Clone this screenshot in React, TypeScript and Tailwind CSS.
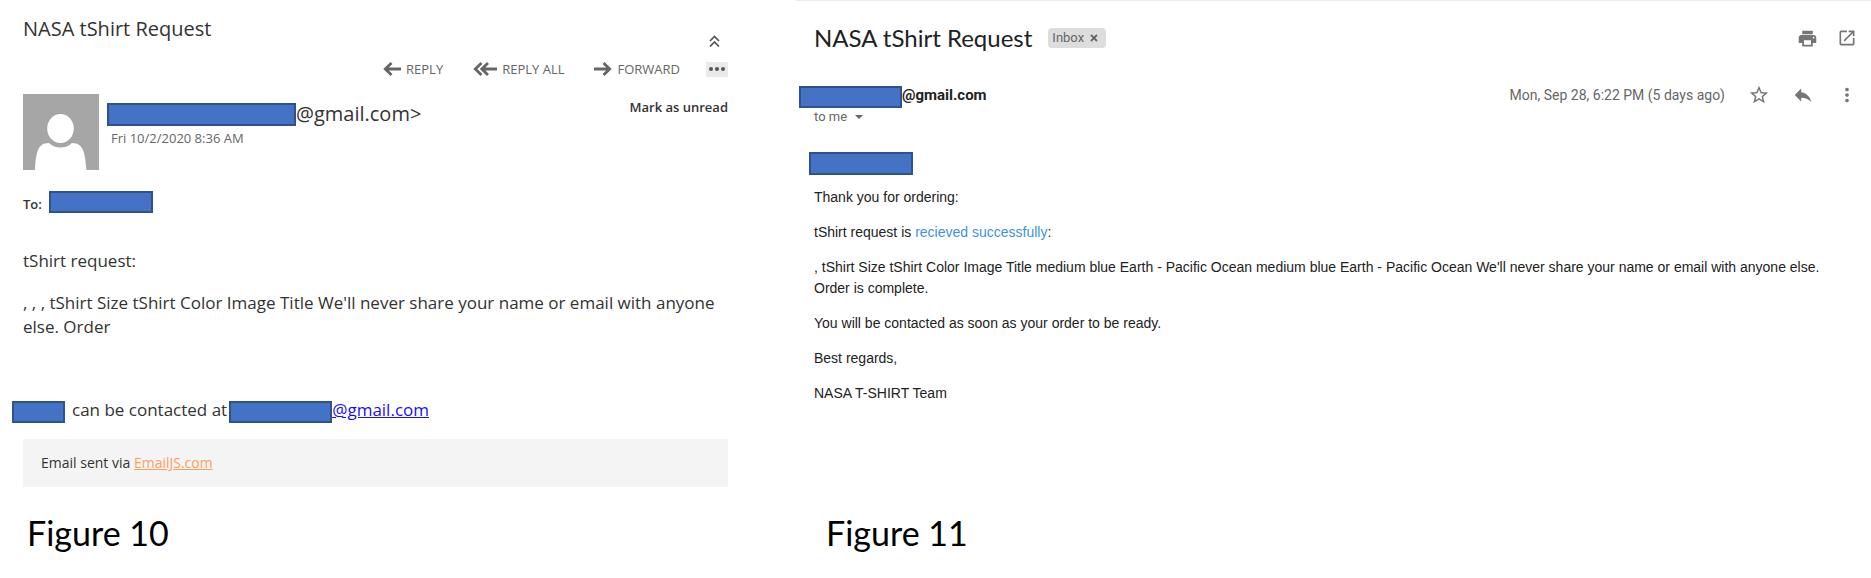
import type { ReactNode } from "react";
import { MdMoreVert, MdOpenInNew, MdPrint, MdReply, MdStarBorder } from "react-icons/md";

function Redacted({ className }: { className: string }) {
  return (
    <span
      aria-hidden="true"
      className={`inline-block shrink-0 border-2 border-[#2f528f] bg-[#4472c4] ${className}`}
    />
  );
}

function ReplyArrow() {
  return (
    <svg width="18" height="14" viewBox="0 0 18 14" fill="none" stroke="#666" strokeWidth="2.8">
      <path d="M2.5 7H18M8.5 1L2.3 7l6.2 6" />
    </svg>
  );
}

function ReplyAllArrow() {
  return (
    <svg width="24" height="14" viewBox="0 0 24 14" fill="none" stroke="#666" strokeWidth="2.8">
      <path d="M9 7H24M8.5 1L2.3 7l6.2 6M15 1L8.8 7l6.2 6" />
    </svg>
  );
}

function ForwardArrow() {
  return (
    <svg width="18" height="14" viewBox="0 0 18 14" fill="none" stroke="#666" strokeWidth="2.8">
      <path d="M0 7H15.5M9.5 1l6.2 6-6.2 6" />
    </svg>
  );
}

function Avatar() {
  return (
    <svg width="76" height="76" viewBox="0 0 76 76" role="img" aria-label="Sender" className="shrink-0">
      <rect width="76" height="76" fill="#a6a6a6" />
      <path
        d="M12 76C13 60 14 49 26 49c6 6 17 6 23 0 12 0 13 11 14.500 27z"
        fill="#fff"
      />
      <ellipse cx="37.5" cy="34.5" rx="14.300" ry="15.500" fill="#a6a6a6" />
      <ellipse cx="37.5" cy="34.5" rx="13.3" ry="14.5" fill="#fff" />
    </svg>
  );
}

function ToolbarButton({ icon, children }: { icon: ReactNode; children: string }) {
  return (
    <button type="button" className="flex items-center gap-[5px] text-[13px] leading-5 text-[#666]">
      {icon}
      {children}
    </button>
  );
}

function IconButton({ label, children }: { label: string; children: ReactNode }) {
  return (
    <button type="button" aria-label={label} className="flex size-5 items-center justify-center text-[#757575]">
      {children}
    </button>
  );
}

function OutlookMessage() {
  return (
    <figure className="pt-[15px] pr-[68px] pl-[23px] font-['Open_Sans','Noto_Sans',sans-serif] text-[#333]">
      <header className="flex h-8 justify-between">
        <h1 className="text-[20px] leading-7">NASA tShirt Request</h1>
        <button type="button" aria-label="Collapse" className="mr-2 self-end">
          <svg width="11" height="12" viewBox="0 0 11 12" fill="none" stroke="#555" strokeWidth="1.700">
            <path d="M1 6l4.500-4.500L10 6M1 11.500L5.500 7l4.500 4.500" />
          </svg>
        </button>
      </header>

      <div className="mt-3 flex h-5 items-center justify-end gap-[26px]">
        <div className="flex gap-[30px]">
          <ToolbarButton icon={<ReplyArrow />}>REPLY</ToolbarButton>
          <ToolbarButton icon={<ReplyAllArrow />}>REPLY ALL</ToolbarButton>
          <ToolbarButton icon={<ForwardArrow />}>FORWARD</ToolbarButton>
        </div>
        <button type="button" aria-label="More actions" className="bg-[#eaeaea]">
          <svg width="22" height="15" viewBox="0 0 22 15" fill="#555">
            <circle cx="5" cy="7" r="2" />
            <circle cx="11" cy="7" r="2" />
            <circle cx="17" cy="7" r="2" />
          </svg>
        </button>
      </div>

      <div className="mt-[15px] flex gap-2">
        <Avatar />
        <div className="pt-2">
          <p className="flex items-center text-[20px] leading-6">
            <Redacted className="h-[23px] w-[189px]" />
            @gmail.com&gt;
          </p>
          <p className="pt-0.5 pl-1 text-[13px] leading-5 text-[#666]">Fri 10/2/2020 8:36 AM</p>
        </div>
        <button type="button" className="ml-auto self-start pt-[3px] text-[13px] leading-5 font-semibold">
          Mark as unread
        </button>
      </div>

      <p className="mt-5 flex items-start gap-[7px] text-[13px] leading-7 font-semibold">
        To:
        <Redacted className="mt-px h-[22px] w-[104px]" />
      </p>

      <div className="mt-[31px] text-[17px] leading-6">
        <p>tShirt request:</p>
        <p className="mt-[18px]">
          , , , tShirt Size tShirt Color Image Title We'll never share your name or email with anyone else. Order
        </p>
        <p className="mt-[59px] -ml-[11px] flex items-start">
          <Redacted className="mt-[3px] mr-[7px] h-[22px] w-[53px]" />
          can be contacted at
          <Redacted className="mt-[3px] ml-0.5 h-[22px] w-[103px]" />
          <a href="#contact" className="text-[#1a0dff] underline">
            @gmail.com
          </a>
        </p>
      </div>

      <p className="mt-4 bg-[#f4f4f4] px-[18px] py-3.5 text-[14px] leading-5">
        Email sent via{" "}
        <a href="#emailjs" className="text-[#ff9d5c] underline">
          EmailJS.com
        </a>
      </p>

      <figcaption className="mt-[26px] pl-1 font-['Lato',sans-serif] text-[34px] leading-10 text-black">
        Figure 10
      </figcaption>
    </figure>
  );
}

function GmailMessage() {
  return (
    <figure className="flex flex-col border-t border-[#e8edf1] pt-[23px] pr-3.5 pl-[18px] font-['Roboto',sans-serif] text-[#222]">
      <header className="flex h-7 items-center">
        <h1 className="font-['Lato',sans-serif] text-[24px] leading-7 text-[#202124]">NASA tShirt Request</h1>
        <span className="ml-4 flex h-5 items-center gap-0.5 rounded-sm bg-[#ddd] px-1 text-[13px] leading-5 text-[#666]">
          Inbox
          <button type="button" aria-label="Remove Inbox label" className="flex w-4 justify-center">
            <svg width="8" height="8" viewBox="0 0 8 8" stroke="#666" strokeWidth="1.800">
              <path d="M1 1l6 6M7 1L1 7" />
            </svg>
          </button>
        </span>
        <div className="ml-auto flex gap-5">
          <IconButton label="Print">
            <MdPrint size={21} className="shrink-0" />
          </IconButton>
          <IconButton label="Open in new window">
            <MdOpenInNew size={20} className="shrink-0" />
          </IconButton>
        </div>
      </header>

      <div className="mt-[33px] flex items-start">
        <div>
          <p className="-ml-[15px] flex items-start text-[15px] leading-5 font-bold">
            <Redacted className="mt-px h-[22px] w-[103px]" />
            @gmail.com
          </p>
          <button type="button" className="flex items-center gap-2 text-[13px] leading-[18px] text-[#666]">
            to me
            <svg width="8" height="4" viewBox="0 0 8 4" fill="#666">
              <path d="M0 0h8L4 4z" />
            </svg>
          </button>
        </div>
        <p className="ml-auto text-[14px] leading-5 text-[#666]">Mon, Sep 28, 6:22 PM (5 days ago)</p>
        <div className="ml-6 flex gap-6">
          <IconButton label="Star">
            <MdStarBorder size={22} className="shrink-0" />
          </IconButton>
          <IconButton label="Reply">
            <MdReply size={22} className="shrink-0" />
          </IconButton>
          <IconButton label="More">
            <MdMoreVert size={22} className="shrink-0" />
          </IconButton>
        </div>
      </div>

      <div className="mt-[26px] flex flex-col gap-3.5 font-['Liberation_Sans',sans-serif] text-[14px] leading-[21px]">
        <Redacted className="-mb-0.5 -ml-[5px] h-[23px] w-[104px]" />
        <p>Thank you for ordering:</p>
        <p>
          tShirt request is <span className="text-[#3d94dd]">recieved successfully</span>:
        </p>
        <p>
          , tShirt Size tShirt Color Image Title medium blue Earth - Pacific Ocean medium blue Earth - Pacific Ocean
          We'll never share your name or email with anyone else. Order is complete.
        </p>
        <p>You will be contacted as soon as your order to be ready.</p>
        <p>Best regards,</p>
        <p>NASA T-SHIRT Team</p>
      </div>

      <figcaption className="mt-[109px] pl-3 font-['Lato',sans-serif] text-[34px] leading-10 text-black">
        Figure 11
      </figcaption>
    </figure>
  );
}

export default function App() {
  return (
    <main className="grid min-h-screen grid-cols-[796fr_1075fr] bg-white">
      <OutlookMessage />
      <GmailMessage />
    </main>
  );
}
